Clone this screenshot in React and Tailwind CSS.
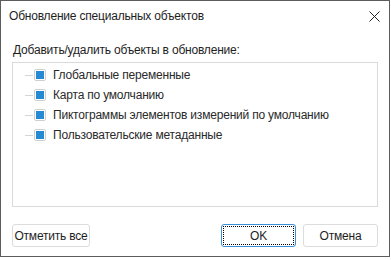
import React from 'react';

const items = [
  'Глобальные переменные',
  'Карта по умолчанию',
  'Пиктограммы элементов измерений по умолчанию',
  'Пользовательские метаданные',
];

const Check = () => (
  <span className="w-[12px] h-[12px] rounded-[2px] border border-[#cfcfcf] bg-white flex items-center justify-center">
    <span className="w-[8px] h-[8px] bg-[#2589d3]" />
  </span>
);

export default function App() {
  return (
    <div className="w-[390px] h-[257px] bg-white border border-[#5c5c5c] flex flex-col text-[12px] tracking-[-0.2px] text-[#1e1e1e] whitespace-nowrap" style={{ fontFamily: '"Liberation Sans", Arial, sans-serif' }}>
      {/* Заголовок */}
      <div className="h-[30px] flex items-center justify-between pl-[8px] pr-[9px]">
        <span>Обновление специальных объектов</span>
        <svg width="11" height="11" viewBox="0 0 11 11" className="text-[#222]">
          <path d="M0.5 0.5L10.5 10.5M10.5 0.5L0.5 10.5" stroke="currentColor" strokeWidth="1" />
        </svg>
      </div>

      <div className="flex-1 flex flex-col px-[11px]">
        <div className="mt-[11px] h-[16px] leading-[16px] pl-[1px]">Добавить/удалить объекты в обновление:</div>

        {/* Дерево */}
        <div className="mt-[4px] h-[145px] border border-[#dadada] pt-[2px]">
          {items.map((t) => (
            <div key={t} className="h-[20px] flex items-center">
              <span className="ml-[12px] w-[8px] border-t border-[#d4d4d4]" />
              <span className="ml-[1px]"><Check /></span>
              <span className="ml-[7px] text-[#2a2a2a]">{t}</span>
            </div>
          ))}
        </div>

        {/* Кнопки */}
        <div className="mt-[17px] flex items-center">
          <button className="w-[78px] h-[23px] border border-[#dcdcdc] rounded-[3px] bg-white">Отметить все</button>
          <div className="ml-auto flex gap-[7px]">
            <button className="w-[75px] h-[23px] border border-[#3a8fd6] rounded-[3px] bg-white p-[1px]">
              <span className="w-full h-full flex items-center justify-center border border-dotted border-black">OK</span>
            </button>
            <button className="w-[75px] h-[23px] border border-[#dcdcdc] rounded-[3px] bg-white">Отмена</button>
          </div>
        </div>
      </div>
    </div>
  );
}
